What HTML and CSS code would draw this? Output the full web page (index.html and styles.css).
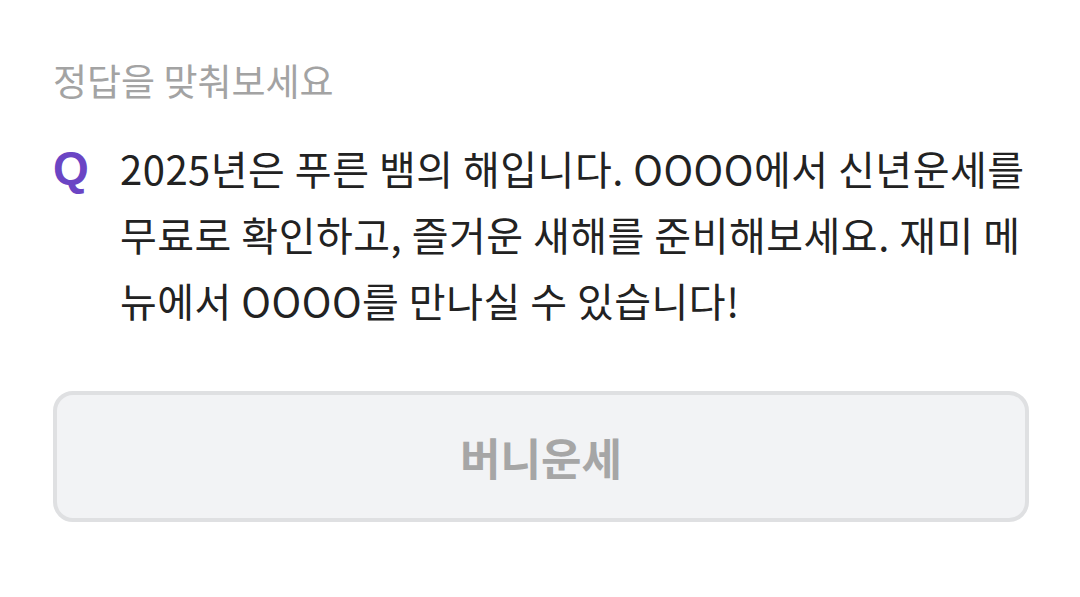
FILE: index.html
```html
<!DOCTYPE html>
<html>
<head lang="ko">
    <meta charset="UTF-8">
    <title>정답을 맞춰보세요</title>
    <link rel="stylesheet" href="styles.css">
</head>
<body>
<div class="quiz">
    <p class="quiz-label">정답을 맞춰보세요</p>
    <div class="question">
        <span class="q-mark">Q</span>
        <p class="q-text">2025년은 푸른 뱀의 해입니다. OOOO에서 신년운세를 무료로 확인하고, 즐거운 새해를 준비해보세요. 재미 메뉴에서 OOOO를 만나실 수 있습니다!</p>
    </div>
    <button class="answer-btn" type="button">버니운세</button>
</div>
</body>
</html>
```

FILE: styles.css
```css
* {
    padding: 0;
    margin: 0;
    box-sizing: border-box;
}

body {
    background: #fff;
    font-family: "Noto Sans CJK KR", "Noto Sans", sans-serif;
}

.quiz {
    width: 1080px;
    padding: 56px 51px 0 53px;
}

.quiz-label {
    font-size: 37px;
    line-height: 48px;
    color: #a3a3a3;
}

.question {
    display: flex;
    margin-top: 31px;
}

.q-mark {
    width: 67px;
    flex-shrink: 0;
    font-family: "Liberation Sans", "Roboto", sans-serif;
    font-weight: bold;
    font-size: 46px;
    line-height: 66px;
    color: #6b45c4;
}

.q-text {
    font-size: 40px;
    line-height: 66px;
    color: #222;
    letter-spacing: 0.5px;
    word-break: break-all;
}

.answer-btn {
    display: block;
    width: 976px;
    height: 131px;
    margin-top: 58px;
    background: #f2f3f5;
    border: 4px solid #dfe0e2;
    border-radius: 20px;
    font-family: "Noto Sans CJK KR", sans-serif;
    font-weight: bold;
    font-size: 44px;
    color: #a6a6a6;
}
```
